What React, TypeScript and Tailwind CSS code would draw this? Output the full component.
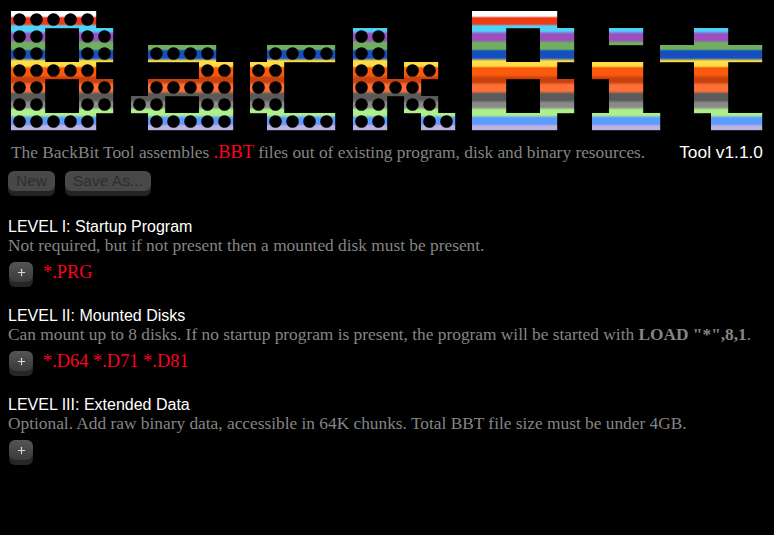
import type { ReactNode } from "react";
import { Plus } from "lucide-react";

const CELL = 17;

// each run: [x, row, number of cells]
type Run = [number, number, number];

const bigB = (x: number): Run[] => [
  [x, 0, 5],
  [x, 1, 2], [x + 4 * CELL, 1, 2],
  [x, 2, 2], [x + 4 * CELL, 2, 2],
  [x, 3, 5],
  [x, 4, 2], [x + 4 * CELL, 4, 2],
  [x, 5, 2], [x + 4 * CELL, 5, 2],
  [x, 6, 5],
];

const dotted: Run[] = [
  ...bigB(11),
  // a
  [148, 2, 4], [199, 3, 2], [148, 4, 5], [131, 5, 2], [199, 5, 2], [148, 6, 5],
  // c
  [267, 2, 4], [250, 3, 2], [250, 4, 2], [250, 5, 2], [267, 6, 4],
  // k
  [353, 1, 2], [353, 2, 2], [353, 3, 2], [404, 3, 2], [353, 4, 4],
  [353, 5, 2], [404, 5, 2], [353, 6, 2], [421, 6, 2],
];

const solid: Run[] = [
  ...bigB(472),
  // i
  [609, 1, 2], [592, 3, 3], [609, 4, 2], [609, 5, 2], [592, 6, 4],
  // t
  [694, 1, 2], [660, 2, 6], [694, 3, 2], [694, 4, 2], [694, 5, 2], [711, 6, 3],
];

const stripes: [number, string][] = [
  [11, "#ffffff"], [16, "#ffffff"], [18, "#f03a17"], [24, "#f03a17"],
  [26, "#4fd2f7"], [31, "#4fd2f7"], [34, "#9b4fc0"], [40, "#9b4fc0"],
  [43, "#6fae60"], [49, "#6fae60"], [51, "#1550c0"], [58, "#1550c0"],
  [61, "#ffdd44"], [66, "#ffdd44"], [68, "#fb5a0c"], [75, "#fb5a0c"],
  [78, "#c8400f"], [82, "#c8400f"], [85, "#ff7038"], [91, "#ff7038"],
  [94, "#5a5a5a"], [100, "#5a5a5a"], [103, "#8a8a8a"], [107, "#8a8a8a"],
  [110, "#aef08a"], [115, "#aef08a"], [118, "#5a9cff"], [124, "#5a9cff"],
  [126, "#c0b0e0"], [130, "#c0b0e0"],
];

function Logo() {
  return (
    <svg width="774" height="140" viewBox="0 0 774 140" className="block">
      <defs>
        <linearGradient id="rainbow" gradientUnits="userSpaceOnUse" x1="0" y1="11" x2="0" y2="130">
          {stripes.map(([y, c], i) => (
            <stop key={i} offset={(y - 11) / 119} stopColor={c} />
          ))}
        </linearGradient>
        <filter id="soft" x="-2%" y="-2%" width="104%" height="104%">
          <feGaussianBlur stdDeviation="0.35" />
        </filter>
      </defs>
      <g filter="url(#soft)">
        {[...dotted, ...solid].map(([x, row, n], i) => (
          <rect key={i} x={x} y={11 + row * CELL} width={n * CELL + 0.2} height={CELL + 0.2} fill="url(#rainbow)" />
        ))}
        {dotted.map(([x, row, n], i) =>
          Array.from({ length: n }).map((_, k) => (
            <circle key={`${i}-${k}`} cx={x + k * CELL + 8.5} cy={11 + row * CELL + 8.5} r="6.3" fill="#000" />
          )),
        )}
      </g>
    </svg>
  );
}

function GreyButton({ label }: { label: string }) {
  return (
    <button className="h-5 rounded-md bg-[#484848] px-2 font-['Liberation_Sans',sans-serif] text-[15.5px] leading-5 text-[#2e2e2e] shadow-[0_5px_0_#232323]">
      {label}
    </button>
  );
}

function AddRow({ exts }: { exts?: string }) {
  return (
    <div className="mt-[7px] flex h-[25px] items-start gap-[10px] pl-px">
      <button className="flex h-5 w-6 items-center justify-center rounded-md bg-gradient-to-b from-[#555555] to-[#3a3a3a] shadow-[0_5px_0_#262626]">
        <Plus size={11} strokeWidth={2.5} className="text-[#d8d8d8]" />
      </button>
      {exts && <span className="text-[18.4px] leading-5 text-[#ff0020]">{exts}</span>}
    </div>
  );
}

function Level({ title, children, exts }: { title: string; children: ReactNode; exts?: string }) {
  return (
    <section className="mb-[19px]">
      <h2 className="font-['Liberation_Sans',sans-serif] text-base leading-[19px] text-white">{title}</h2>
      <p className="text-[17.33px] leading-[19px] text-[#858585]">{children}</p>
      <AddRow exts={exts} />
    </section>
  );
}

export default function App() {
  return (
    <div className="h-[535px] overflow-hidden bg-black font-['Liberation_Serif',serif]">
      <Logo />
      <div className="mt-[2px] flex items-center justify-between px-[11px] text-[17.33px] leading-5 text-[#858585]">
        <p>
          The BackBit Tool assembles <span className="text-[18.4px] text-[#ff0020]">.BBT</span> files out of existing
          program, disk and binary resources.
        </p>
        <span className="-mt-[2px] font-['Liberation_Sans',sans-serif] text-white">Tool v1.1.0</span>
      </div>
      <div className="mt-[1px] flex gap-[10px] pl-2 pt-[7px]">
        <GreyButton label="New" />
        <GreyButton label="Save As..." />
      </div>
      <div className="mt-[26px] pl-2">
        <Level title="LEVEL I: Startup Program" exts="*.PRG">
          Not required, but if not present then a mounted disk must be present.
        </Level>
        <Level title="LEVEL II: Mounted Disks" exts="*.D64 *.D71 *.D81">
          Can mount up to 8 disks. If no startup program is present, the program will be started with{" "}
          <b>LOAD "*",8,1</b>.
        </Level>
        <Level title="LEVEL III: Extended Data">
          Optional. Add raw binary data, accessible in 64K chunks. Total BBT file size must be under 4GB.
        </Level>
      </div>
    </div>
  );
}
